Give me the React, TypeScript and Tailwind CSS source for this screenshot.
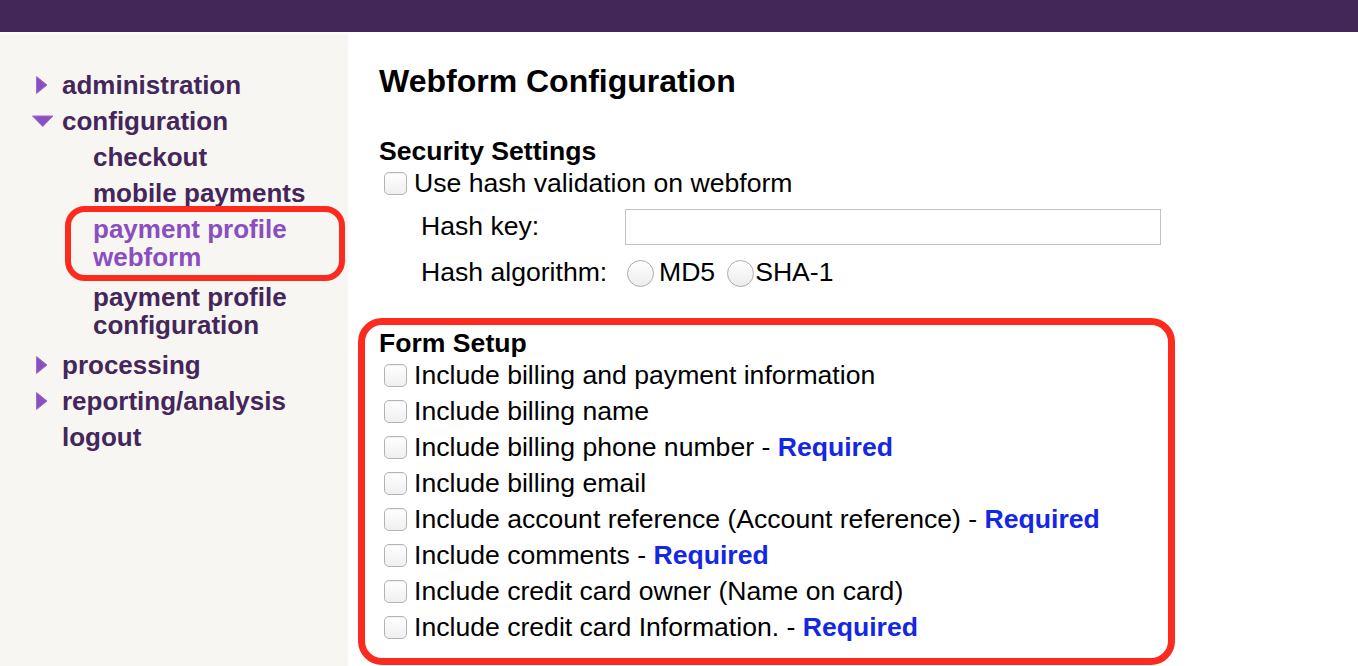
import React from 'react';

const font = { fontFamily: '"Liberation Sans", Arial, sans-serif' };

function RightArrow() {
  return (
    <svg width="14" height="20" viewBox="0 0 14 20" className="ml-[3px] shrink-0">
      <polygon points="1.5,1.5 12,10 1.5,18.5" fill="#8a50c0" stroke="#9b6ccb" strokeWidth="1" strokeLinejoin="round" />
    </svg>
  );
}

function DownArrow() {
  return (
    <svg width="22" height="13" viewBox="0 0 22 13" className="shrink-0">
      <polygon points="0.5,1 21,1 10.75,11.5" fill="#8a50c0" stroke="#9b6ccb" strokeWidth="1" strokeLinejoin="round" />
    </svg>
  );
}

function Checkbox() {
  return (
    <span className="inline-block w-[23px] h-[23px] shrink-0 rounded-[5px] border border-[#b3b3b3] bg-gradient-to-b from-white to-[#efefef] shadow-[inset_0_1px_1px_rgba(0,0,0,0.05)]" />
  );
}

function Radio() {
  return (
    <span className="inline-block w-[27px] h-[27px] shrink-0 rounded-full border border-[#ababab] bg-gradient-to-b from-white to-[#ececec]" />
  );
}

function Required() {
  return <span className="font-bold text-[#1428e4]">Required</span>;
}

type NavItem = { label: string; open?: boolean; closed?: boolean };

const topNav: NavItem[] = [
  { label: 'administration', closed: true },
  { label: 'configuration', open: true },
];

const subNav = [
  { label: 'checkout' },
  { label: 'mobile payments' },
  { label: 'payment profile webform', active: true, wrap: true },
  { label: 'payment profile configuration', wrap: true },
];

const bottomNav: NavItem[] = [
  { label: 'processing', closed: true },
  { label: 'reporting/analysis', closed: true },
  { label: 'logout' },
];

function TopItem({ item }: { item: NavItem }) {
  return (
    <div className="flex items-center leading-[36px]">
      <span className="w-[30px] flex items-center">
        {item.closed && <RightArrow />}
        {item.open && <DownArrow />}
      </span>
      <span>{item.label}</span>
    </div>
  );
}

const formRows: { text: string; required?: boolean }[] = [
  { text: 'Include billing and payment information' },
  { text: 'Include billing name' },
  { text: 'Include billing phone number - ', required: true },
  { text: 'Include billing email' },
  { text: 'Include account reference (Account reference) - ', required: true },
  { text: 'Include comments - ', required: true },
  { text: 'Include credit card owner (Name on card)' },
  { text: 'Include credit card Information. - ', required: true },
];

export default function App() {
  return (
    <div className="relative w-[1358px] h-[666px] overflow-hidden bg-white flex flex-col" style={font}>
      <div className="h-[32px] bg-[#442759] shrink-0" />
      <div className="flex flex-1 pt-[2px]">
        {/* Sidebar */}
        <aside className="w-[348px] shrink-0 bg-[#f7f6f3] pl-[32px] pr-[20px] pt-[33px] text-[26px] font-bold text-[#45265a]">
          {topNav.map((item) => (
            <TopItem key={item.label} item={item} />
          ))}
          <div className="pl-[61px]">
            {subNav.map((s) =>
              s.wrap ? (
                <div
                  key={s.label}
                  className={`leading-[28px] py-1 mb-1 ${s.active ? 'text-[#8a4ebf]' : ''}`}
                >
                  {s.label}
                </div>
              ) : (
                <div key={s.label} className="leading-[36px]">
                  {s.label}
                </div>
              )
            )}
          </div>
          {bottomNav.map((item) => (
            <TopItem key={item.label} item={item} />
          ))}
        </aside>

        {/* Main */}
        <main className="flex-1 pl-[31px] pt-[27px] text-[26.6px] text-black">
          <h1 className="text-[32px] font-bold leading-[40px]">Webform Configuration</h1>

          <h2 className="mt-[36px] font-bold leading-[28px]">Security Settings</h2>
          <label className="flex items-center gap-[7px] pl-[5px] leading-[36px]">
            <Checkbox />
            <span>Use hash validation on webform</span>
          </label>
          <div className="mt-2 pl-[42px] flex items-center h-[36px]">
            <span className="w-[204px]">Hash key:</span>
            <span className="w-[536px] h-[36px] border border-[#c2c2c2] bg-white" />
          </div>
          <div className="mt-[10px] pl-[42px] flex items-center h-[36px]">
            <span className="w-[206px]">Hash algorithm:</span>
            <Radio />
            <span className="ml-[5px] mr-[12px]">MD5</span>
            <Radio />
            <span className="ml-[1px]">SHA-1</span>
          </div>

          <h2 className="mt-[38px] font-bold leading-[28px]">Form Setup</h2>
          {formRows.map((r) => (
            <label key={r.text} className="flex items-center gap-[7px] pl-[5px] leading-[36px]">
              <Checkbox />
              <span className="whitespace-pre">
                {r.text}
                {r.required && <Required />}
              </span>
            </label>
          ))}
        </main>
      </div>

      {/* annotation highlights */}
      <div className="absolute left-[65px] top-[206px] w-[280px] h-[75px] rounded-[20px] border-[6px] border-[#fd2a1f]" />
      <div className="absolute left-[358px] top-[318px] w-[817px] h-[347px] rounded-[24px] border-[7px] border-[#fd2a1f]" />
    </div>
  );
}
